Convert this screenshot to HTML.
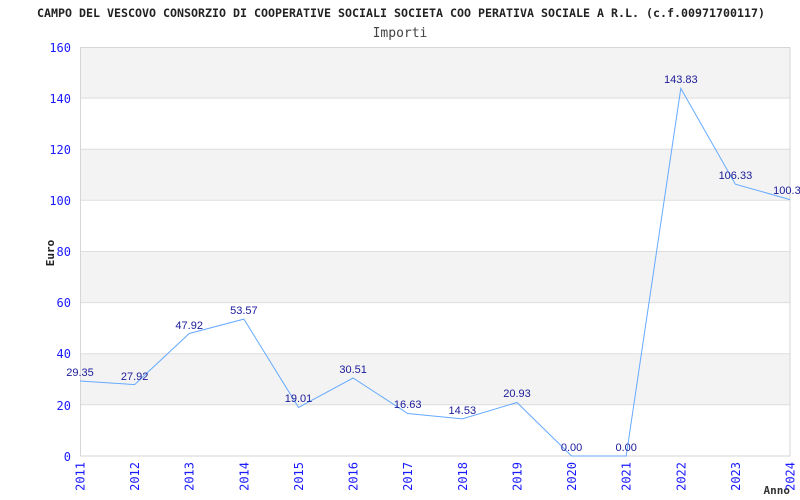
<!DOCTYPE html>
<html><head><meta charset="utf-8"><style>
html,body{margin:0;padding:0;background:#fff;width:800px;height:500px;overflow:hidden}
svg{display:block}
.m{font-family:"DejaVu Sans Mono","Liberation Mono",monospace}
.s{font-family:"Liberation Sans",sans-serif}
</style></head><body>
<svg width="800" height="500" xmlns="http://www.w3.org/2000/svg">
<text x="37" y="17" textLength="728" lengthAdjust="spacingAndGlyphs" class="m" font-size="11.5" font-weight="bold" fill="#222">CAMPO DEL VESCOVO CONSORZIO DI COOPERATIVE SOCIALI SOCIETA COO PERATIVA SOCIALE A R.L. (c.f.00971700117)</text>
<text x="400" y="37" text-anchor="middle" class="m" font-size="13" fill="#444">Importi</text>
<g fill="#f3f3f3">
<rect x="80" y="47" width="710" height="51.1"/>
<rect x="80" y="149.2" width="710" height="51.1"/>
<rect x="80" y="251.5" width="710" height="51.1"/>
<rect x="80" y="353.7" width="710" height="51.1"/>
</g>
<g stroke="#dddddd" stroke-width="1">
<line x1="80" y1="98.1" x2="790" y2="98.1"/>
<line x1="80" y1="149.2" x2="790" y2="149.2"/>
<line x1="80" y1="200.3" x2="790" y2="200.3"/>
<line x1="80" y1="251.5" x2="790" y2="251.5"/>
<line x1="80" y1="302.6" x2="790" y2="302.6"/>
<line x1="80" y1="353.7" x2="790" y2="353.7"/>
<line x1="80" y1="404.8" x2="790" y2="404.8"/>
</g>
<rect x="80.5" y="47.5" width="709.5" height="408.5" fill="none" stroke="#d6d6d6"/>
<g class="m" font-size="12" fill="#1a1aff" text-anchor="end">
<text x="71" y="52">160</text><text x="71" y="103">140</text><text x="71" y="154">120</text>
<text x="71" y="205">100</text><text x="71" y="256">80</text><text x="71" y="307">60</text>
<text x="71" y="358">40</text><text x="71" y="410">20</text><text x="71" y="461">0</text>
</g>
<text transform="translate(54,253) rotate(-90)" text-anchor="middle" class="m" font-size="11" font-weight="bold" fill="#222">Euro</text>
<text x="790" y="494" text-anchor="end" class="m" font-size="11" font-weight="bold" fill="#333">Anno</text>
<g class="m" font-size="12" fill="#1a1aff" text-anchor="end">
<text transform="translate(84.5,462) rotate(-90)">2011</text>
<text transform="translate(139.1,462) rotate(-90)">2012</text>
<text transform="translate(193.7,462) rotate(-90)">2013</text>
<text transform="translate(248.4,462) rotate(-90)">2014</text>
<text transform="translate(303,462) rotate(-90)">2015</text>
<text transform="translate(357.6,462) rotate(-90)">2016</text>
<text transform="translate(412.2,462) rotate(-90)">2017</text>
<text transform="translate(466.8,462) rotate(-90)">2018</text>
<text transform="translate(521.5,462) rotate(-90)">2019</text>
<text transform="translate(576.1,462) rotate(-90)">2020</text>
<text transform="translate(630.7,462) rotate(-90)">2021</text>
<text transform="translate(685.3,462) rotate(-90)">2022</text>
<text transform="translate(739.9,462) rotate(-90)">2023</text>
<text transform="translate(794.5,462) rotate(-90)">2024</text>
</g>
<polyline fill="none" stroke="#66aaff" stroke-width="1" points="80,381 134.6,384.6 189.2,333.5 243.9,319.1 298.5,407.4 353.1,378 407.7,413.5 462.3,418.9 517,402.5 571.6,456 626.2,456 680.8,88.4 735.4,184.2 790,199.6"/>
<g class="s" font-size="11" fill="#1a1a99" text-anchor="middle">
<text x="80" y="376">29.35</text>
<text x="134.6" y="380">27.92</text>
<text x="189.2" y="329">47.92</text>
<text x="243.9" y="314">53.57</text>
<text x="298.5" y="402">19.01</text>
<text x="353.1" y="373">30.51</text>
<text x="407.7" y="408">16.63</text>
<text x="462.3" y="414">14.53</text>
<text x="517" y="397">20.93</text>
<text x="571.6" y="451">0.00</text>
<text x="626.2" y="451">0.00</text>
<text x="680.8" y="83">143.83</text>
<text x="735.4" y="179">106.33</text>
<text x="790" y="194">100.33</text>
</g>
</svg>
</body></html>
